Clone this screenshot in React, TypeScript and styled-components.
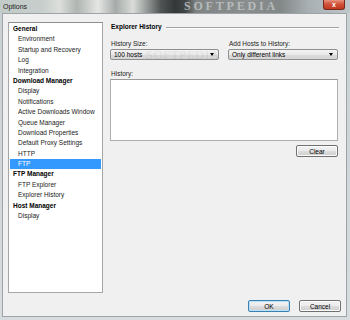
import React from "react";
import styled, { createGlobalStyle } from "styled-components";

const Global = createGlobalStyle`
  html, body { margin: 0; padding: 0; }
  body { width: 350px; height: 320px; overflow: hidden; background: #d5dadd; }
  * { box-sizing: border-box; }
`;

const Window = styled.div`
  position: relative;
  width: 350px;
  height: 320px;
  display: flex;
  flex-direction: column;
  font-family: "Liberation Sans", Arial, sans-serif;
  font-size: 6.5px;
  color: #000;
  background: linear-gradient(180deg, #c9d0d2 0%, #d7dcdf 100%);
  overflow: hidden;
`;

const TitleBar = styled.div`
  position: relative;
  height: 13px;
  flex: 0 0 13px;
  display: flex;
  align-items: flex-start;
  background: linear-gradient(
    90deg,
    #c3cbc9 0%,
    #c7cecb 12%,
    #dcdfdc 17%,
    #b0b5b2 22%,
    #e4e6e3 28%,
    #a6aba9 33%,
    #d9dcd9 38%,
    #959a98 42%,
    #505353 46%,
    #353839 50%,
    #424545 53%,
    #7f8383 56%,
    #8a8e8e 70%,
    #828787 80%,
    #a8afb2 88%,
    #c0c7ca 100%
  );
`;

const Title = styled.span`
  padding: 2px 0 0 3px;
  font-size: 7px;
  color: #1a1a1a;
  line-height: 9px;
`;

const Watermark = styled.span`
  position: absolute;
  left: 184px;
  top: 0;
  font-family: "Liberation Serif", "Times New Roman", serif;
  font-size: 12px;
  font-weight: bold;
  line-height: 13px;
  letter-spacing: 2.8px;
  color: #c4c8c8;
  opacity: 0.8;
`;

const CloseButton = styled.div`
  position: absolute;
  right: 5px;
  top: 0;
  width: 22px;
  height: 10px;
  border-radius: 0 0 3px 3px;
  background: linear-gradient(180deg, #e6917f 0%, #d1533a 45%, #c0391e 100%);
  border: 1px solid #7a2a1c;
  border-top: none;
  display: flex;
  align-items: center;
  justify-content: center;
  color: #fff;
  font-size: 7px;
  font-weight: bold;
  line-height: 1;
`;

const Client = styled.div`
  flex: 1;
  margin: 0 3px 3px 2px;
  border: 1px solid #9da3a8;
  background: #f0f0f0;
  display: grid;
  grid-template-rows: 271px 1fr;
  padding: 8px 6px 0 5px;
`;

const Body = styled.div`
  display: flex;
  gap: 7px;
`;

const Tree = styled.div`
  width: 95px;
  height: 271px;
  background: #fff;
  border: 1px solid #a6a6a6;
  border-top-color: #8e8e8e;
  padding: 1px 1px 0 1px;
`;

const TreeItem = styled.div<{ $header?: boolean; $selected?: boolean }>`
  height: 10.4px;
  line-height: 10.4px;
  padding-left: ${(p) => (p.$header ? "3px" : "8px")};
  font-weight: ${(p) => (p.$header ? "bold" : "normal")};
  white-space: nowrap;
  color: ${(p) => (p.$selected ? "#fff" : p.$header ? "#000" : "#222")};
  background: ${(p) => (p.$selected ? "#3399ff" : "transparent")};
`;

const Panel = styled.div`
  flex: 1;
  position: relative;
  display: flex;
  flex-direction: column;
`;

const GroupHeader = styled.div`
  display: flex;
  align-items: center;
  gap: 4px;
  font-weight: bold;
  height: 10px;
  line-height: 10px;
  padding-left: 1px;
  margin-right: 2px;
`;

const HeaderLine = styled.div`
  flex: 1;
  height: 2px;
  border-top: 1px solid #a0a0a0;
  border-bottom: 1px solid #fff;
  margin-top: 1px;
`;

const FieldRow = styled.div`
  display: flex;
  gap: 9px;
  margin-top: 7px;
  margin-right: 3px;
`;

const Field = styled.div<{ $w: number }>`
  width: ${(p) => p.$w}px;
  display: flex;
  flex-direction: column;
`;

const Label = styled.div`
  height: 9px;
  line-height: 9px;
  color: #222;
  padding-left: 1px;
`;

const Select = styled.div`
  margin-top: 1px;
  height: 11px;
  border: 1px solid #8e8f8f;
  border-radius: 2px;
  background: linear-gradient(180deg, #f4f4f4 0%, #e9e9e9 50%, #dcdcdc 51%, #d4d4d4 100%);
  display: flex;
  align-items: center;
  justify-content: space-between;
  padding: 0 4px 0 3px;
  line-height: 9px;
`;

const Arrow = styled.span`
  width: 0;
  height: 0;
  border-left: 2.5px solid transparent;
  border-right: 2.5px solid transparent;
  border-top: 3px solid #000;
`;

const HistoryLabel = styled(Label)`
  margin-top: 9px;
`;

const TextArea = styled.div`
  margin-top: 1px;
  height: 62px;
  margin-right: 3px;
  background: #fff;
  border: 1px solid #abadb3;
  border-top-color: #9a9a9a;
`;

const Button = styled.div<{ $default?: boolean }>`
  width: 42px;
  height: 12px;
  border: 1px solid ${(p) => (p.$default ? "#3c7fb1" : "#707070")};
  border-radius: 2px;
  background: linear-gradient(180deg, #f2f2f2 0%, #ebebeb 50%, #dddddd 51%, #cfcfcf 100%);
  box-shadow: ${(p) => (p.$default ? "inset 0 0 0 1px #b8e0f8" : "inset 0 0 0 1px #fbfbfb")};
  display: flex;
  align-items: center;
  justify-content: center;
  line-height: 9px;
`;

const ClearRow = styled.div`
  display: flex;
  justify-content: flex-end;
  margin-top: 4px;
  margin-right: 3px;
`;

const Footer = styled.div`
  display: flex;
  justify-content: flex-end;
  align-items: flex-start;
  gap: 9px;
  padding-top: 7px;
`;

const FaintMark = styled.span`
  position: absolute;
  left: 36px;
  top: 26px;
  font-family: "Liberation Serif", serif;
  font-size: 12px;
  color: #000;
  opacity: 0.06;
  letter-spacing: 1px;
  pointer-events: none;
`;

type Item = { label: string; header?: boolean; selected?: boolean };

const items: Item[] = [
  { label: "General", header: true },
  { label: "Environment" },
  { label: "Startup and Recovery" },
  { label: "Log" },
  { label: "Integration" },
  { label: "Download Manager", header: true },
  { label: "Display" },
  { label: "Notifications" },
  { label: "Active Downloads Window" },
  { label: "Queue Manager" },
  { label: "Download Properties" },
  { label: "Default Proxy Settings" },
  { label: "HTTP" },
  { label: "FTP", selected: true },
  { label: "FTP Manager", header: true },
  { label: "FTP Explorer" },
  { label: "Explorer History" },
  { label: "Host Manager", header: true },
  { label: "Display" },
];

export default function App() {
  return (
    <>
      <Global />
      <Window>
        <TitleBar>
          <Title>Options</Title>
          <Watermark>SOFTPEDIA</Watermark>
          <CloseButton>x</CloseButton>
        </TitleBar>
        <Client>
          <Body>
            <Tree>
              {items.map((it, i) => (
                <TreeItem key={i} $header={it.header} $selected={it.selected}>
                  {it.label}
                </TreeItem>
              ))}
            </Tree>
            <Panel>
              <GroupHeader>
                Explorer History
                <HeaderLine />
              </GroupHeader>
              <FieldRow>
                <Field $w={109}>
                  <Label>History Size:</Label>
                  <Select>
                    <span>100 hosts</span>
                    <Arrow />
                  </Select>
                </Field>
                <Field $w={110}>
                  <Label>Add Hosts to History:</Label>
                  <Select>
                    <span>Only different links</span>
                    <Arrow />
                  </Select>
                </Field>
              </FieldRow>
              <HistoryLabel>History:</HistoryLabel>
              <TextArea />
              <ClearRow>
                <Button>Clear</Button>
              </ClearRow>
              <FaintMark>SOFTPEDIA</FaintMark>
            </Panel>
          </Body>
          <Footer>
            <Button $default>OK</Button>
            <Button>Cancel</Button>
          </Footer>
        </Client>
      </Window>
    </>
  );
}
